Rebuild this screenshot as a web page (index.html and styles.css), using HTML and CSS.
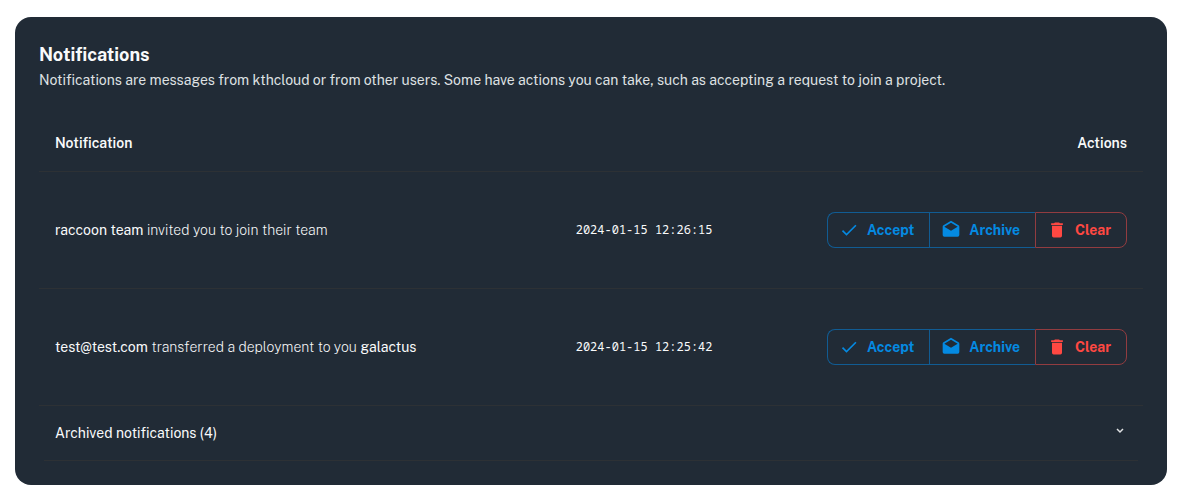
FILE: index.html
```html
<!DOCTYPE html>
<html lang="en">
<head>
<meta charset="utf-8">
<meta name="viewport" content="width=device-width, initial-scale=1">
<title>Notifications</title>
<link rel="stylesheet" href="styles.css">
</head>
<body>
<svg class="sprite" aria-hidden="true">
  <symbol id="check" viewBox="0 0 24 24"><path d="M21 7 9 19l-5.500-5.500 1.410-1.410L9 16.170 19.590 5.590z"/></symbol>
  <symbol id="mail" viewBox="0 0 24 24"><path d="M22 8v10a2 2 0 0 1-2 2H4a2 2 0 0 1-2-2V8c0-.730.390-1.360.970-1.710L12 1l9.030 5.290c.580.350.970.980.970 1.710m-10 5 8-5-8-4.680L4 8z"/></symbol>
  <symbol id="trash" viewBox="0 0 24 24"><path d="M19 4h-3.500l-1-1h-5l-1 1H5v2h14M6 19a2 2 0 0 0 2 2h8a2 2 0 0 0 2-2V7H6z"/></symbol>
</svg>
<main class="card">
  <header class="card-header">
    <h1 class="title">Notifications</h1>
    <p class="subtitle">Notifications are messages from kthcloud or from other users. Some have actions you can take, such as accepting a request to join a project.</p>
  </header>
  <table class="table">
    <thead>
      <tr><th class="message" scope="col">Notification</th><td class="time"></td><th class="actions" scope="col">Actions</th></tr>
    </thead>
    <tbody>
      <tr>
        <td class="message"><strong>raccoon team</strong> invited you to join their team</td>
        <td class="time"><time datetime="2024-01-15T12:26:15">2024-01-15 12:26:15</time></td>
        <td class="actions">
          <div class="button-group">
            <button class="button" type="button"><svg class="icon"><use href="#check"/></svg>Accept</button>
            <button class="button" type="button"><svg class="icon"><use href="#mail"/></svg>Archive</button>
            <button class="button button-danger" type="button"><svg class="icon"><use href="#trash"/></svg>Clear</button>
          </div>
        </td>
      </tr>
      <tr>
        <td class="message"><strong>test@test.com</strong> transferred a deployment to you <strong>galactus</strong></td>
        <td class="time"><time datetime="2024-01-15T12:25:42">2024-01-15 12:25:42</time></td>
        <td class="actions">
          <div class="button-group">
            <button class="button" type="button"><svg class="icon"><use href="#check"/></svg>Accept</button>
            <button class="button" type="button"><svg class="icon"><use href="#mail"/></svg>Archive</button>
            <button class="button button-danger" type="button"><svg class="icon"><use href="#trash"/></svg>Clear</button>
          </div>
        </td>
      </tr>
    </tbody>
  </table>
  <div class="archived">
    <button class="archived-toggle" type="button" aria-expanded="false">Archived notifications (4)
      <svg class="chevron" viewBox="0 0 14 14"><path d="m4 3 3 3 3-3"/></svg>
    </button>
  </div>
</main>
</body>
</html>
```

FILE: styles.css
```css
* { box-sizing: border-box; }
body {
  margin: 17px 13px 13px 15px;
  background: #fff;
  color: #f9fafb;
  font-family: "Public Sans", "Open Sans", sans-serif;
  font-size: 14px;
  line-height: 22px;
}
.sprite { position: absolute; width: 0; height: 0; }
.card { padding: 24px; border-radius: 16px; background: #212b36; }
.title { margin: 0; font-size: 18px; line-height: 28px; font-weight: 700; }
.subtitle { margin: 0; color: #dfe1e3; }
.table { width: 100%; margin-top: 24px; border-collapse: collapse; table-layout: fixed; }
.table th, .table td { padding: 17px 16px; border-bottom: 1px solid #2d3135; text-align: left; vertical-align: middle; }
.table th { font-weight: 600; }
.table td { padding: 40px 16px; color: #f9fafb; font-weight: 200; }
.table thead td { padding: 0; }
.table strong { color: #f9fafb; font-weight: 400; }
.message { width: 43%; }
.time { width: 22%; }
.table td.time { padding-left: 62px; padding-right: 0; color: #f9fafb; font: 12px/22px "Noto Sans Mono", "DejaVu Sans Mono", monospace; }
.table .actions { text-align: right; }
.button-group { display: flex; justify-content: flex-end; }
.button {
  display: flex;
  align-items: center;
  gap: 8px;
  height: 36px;
  padding: 0 15px 0 11px;
  border: 1px solid #115c93;
  border-right: 0;
  background: none;
  color: #048ae2;
  font: 700 14px/24px "Public Sans", "Open Sans", sans-serif;
  cursor: pointer;
}
.button:first-child { border-radius: 8px 0 0 8px; }
.button-danger { border: 1px solid #923c40; border-radius: 0 8px 8px 0; color: #ff4842; }
.icon { width: 20px; height: 20px; fill: currentColor; }
.archived { margin: 0 5px; border-bottom: 1px solid #2d3135; }
.archived-toggle {
  display: flex;
  width: 100%;
  align-items: center;
  justify-content: space-between;
  padding: 16px 11px;
  border: 0;
  background: none;
  color: #f9fafb;
  font: inherit;
  cursor: pointer;
}
.chevron { width: 14px; height: 14px; fill: none; stroke: #dfe1e3; stroke-width: 1.5; }
```
